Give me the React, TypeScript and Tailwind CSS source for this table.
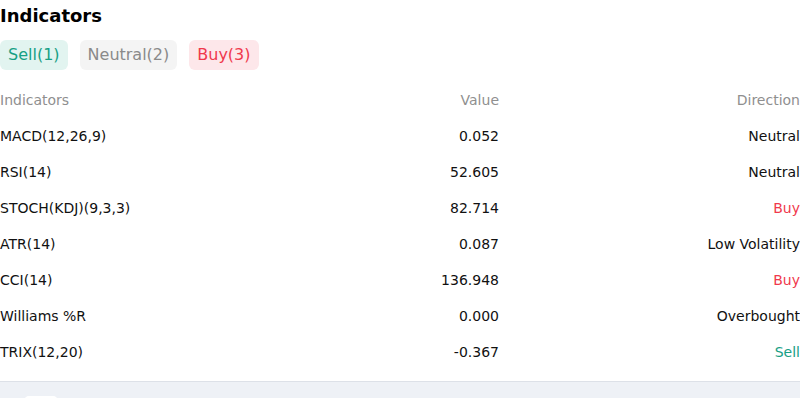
const rows = [
  { name: 'MACD(12,26,9)', value: '0.052', dir: 'Neutral', tone: 'text-[#111]' },
  { name: 'RSI(14)', value: '52.605', dir: 'Neutral', tone: 'text-[#111]' },
  { name: 'STOCH(KDJ)(9,3,3)', value: '82.714', dir: 'Buy', tone: 'text-[#f0394c]' },
  { name: 'ATR(14)', value: '0.087', dir: 'Low Volatility', tone: 'text-[#111]' },
  { name: 'CCI(14)', value: '136.948', dir: 'Buy', tone: 'text-[#f0394c]' },
  { name: 'Williams %R', value: '0.000', dir: 'Overbought', tone: 'text-[#111]' },
  { name: 'TRIX(12,20)', value: '-0.367', dir: 'Sell', tone: 'text-[#17a085]' },
]

export default function App() {
  return (
    <div className="w-[800px] h-[398px] overflow-hidden bg-[#eef1f6] font-['DejaVu_Sans',sans-serif]">
      <div className="bg-white pb-[11px] border-b border-[#dde1e8]">
        <h2 className="text-[18px] leading-[32px] font-bold text-black">Indicators</h2>
        <div className="flex gap-3 mt-[8px]">
          <span className="h-[30px] px-2 flex items-center rounded-md bg-[#e2f4f0] text-[#17a085] text-base">Sell(1)</span>
          <span className="h-[30px] px-2 flex items-center rounded-md bg-[#f4f4f4] text-[#8a8a8a] text-base">Neutral(2)</span>
          <span className="h-[30px] px-2 flex items-center rounded-md bg-[#fde7ea] text-[#f0394c] text-base">Buy(3)</span>
        </div>
        <div className="mt-[12px] text-sm">
          <div className="flex h-9 items-center text-[#8f8f8f]">
            <div className="w-[300px]">Indicators</div>
            <div className="w-[199px] text-right">Value</div>
            <div className="flex-1 text-right">Direction</div>
          </div>
          {rows.map((r) => (
            <div key={r.name} className="flex h-9 items-center text-[#111]">
              <div className="w-[300px]">{r.name}</div>
              <div className="w-[199px] text-right">{r.value}</div>
              <div className={`flex-1 text-right ${r.tone}`}>{r.dir}</div>
            </div>
          ))}
        </div>
      </div>
      <div className="px-[24px] pt-[14px]">
        <div className="w-[34px] h-[10px] rounded-md bg-white" />
      </div>
    </div>
  )
}
